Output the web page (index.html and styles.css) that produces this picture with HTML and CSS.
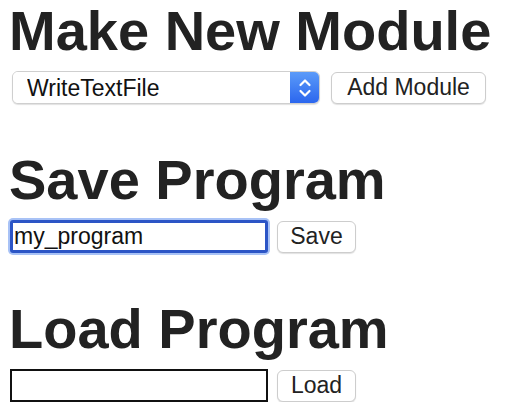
FILE: index.html
```html
<!DOCTYPE html>
<html lang="en">
<head>
<meta charset="utf-8">
<title>Program Builder</title>
<link rel="stylesheet" href="styles.css">
</head>
<body>
  <section class="section">
    <h1 class="title">Make New Module</h1>
    <div class="row">
      <div class="select-wrap">
        <select class="select">
          <option>WriteTextFile</option>
        </select>
        <span class="select-arrow">
          <svg width="14" height="24" viewBox="0 0 14 24" aria-hidden="true">
            <path d="M2.5 9 L7 4.5 L11.5 9" fill="none" stroke="#fff" stroke-width="2.2" stroke-linecap="round" stroke-linejoin="round"/>
            <path d="M2.5 15 L7 19.5 L11.5 15" fill="none" stroke="#fff" stroke-width="2.2" stroke-linecap="round" stroke-linejoin="round"/>
          </svg>
        </span>
      </div>
      <button class="btn btn-add" type="button">Add Module</button>
    </div>
  </section>

  <section class="section">
    <h1 class="title">Save Program</h1>
    <div class="row">
      <input class="field field-focus" type="text" value="my_program">
      <button class="btn btn-small" type="button">Save</button>
    </div>
  </section>

  <section class="section">
    <h1 class="title">Load Program</h1>
    <div class="row">
      <input class="field field-plain" type="text" value="">
      <button class="btn btn-small" type="button">Load</button>
    </div>
  </section>
</body>
</html>
```

FILE: styles.css
```css
* {
  box-sizing: border-box;
}

body {
  margin: 0;
  padding: 1px 0 0 9px;
  font-family: "Liberation Sans", Arial, Helvetica, sans-serif;
  color: #222;
  background: #fff;
}

.section {
  margin-bottom: 46px;
}

.section:last-child {
  margin-bottom: 0;
}

.title {
  margin: 0 0 10px;
  font-size: 56px;
  line-height: 60px;
  font-weight: bold;
  color: #222;
}

.row {
  display: flex;
  align-items: center;
  height: 33px;
}

.select-wrap {
  display: flex;
  width: 308px;
  height: 33px;
  margin-left: 3px;
  margin-right: 11px;
  border: 1px solid #cfcfcf;
  border-radius: 6px;
  overflow: hidden;
  box-shadow: 0 1px 1px rgba(0, 0, 0, 0.12);
  background: #fff;
}

.select {
  flex: 1;
  appearance: none;
  -webkit-appearance: none;
  border: none;
  background: #fff;
  font-family: inherit;
  font-size: 23px;
  color: #111;
  padding: 0 0 0 14px;
  margin: 0;
  outline: none;
}

.select-arrow {
  width: 29px;
  display: flex;
  align-items: center;
  justify-content: center;
  background: linear-gradient(#5b9bf9, #2b66ee);
}

.btn {
  height: 32px;
  padding: 0;
  background: #fff;
  border: 1px solid #cdcdcd;
  border-radius: 6px;
  box-shadow: 0 1px 1px rgba(0, 0, 0, 0.12);
  font-family: inherit;
  font-size: 23px;
  color: #222;
  text-align: center;
}

.btn-add {
  width: 155px;
}

.btn-small {
  width: 79px;
}

.field {
  width: 258px;
  height: 33px;
  margin-left: 1px;
  margin-right: 9px;
  padding: 0 0 0 2px;
  font-family: inherit;
  font-size: 23px;
  color: #111;
  background: #fff;
  outline: none;
}

.field-focus {
  border: 3px solid #2c55c6;
  border-radius: 3px;
  box-shadow: 0 0 0 2px #a8c2f6;
  padding-left: 1px;
}

.field-plain {
  border: 2px solid #111;
  border-radius: 0;
}
```
